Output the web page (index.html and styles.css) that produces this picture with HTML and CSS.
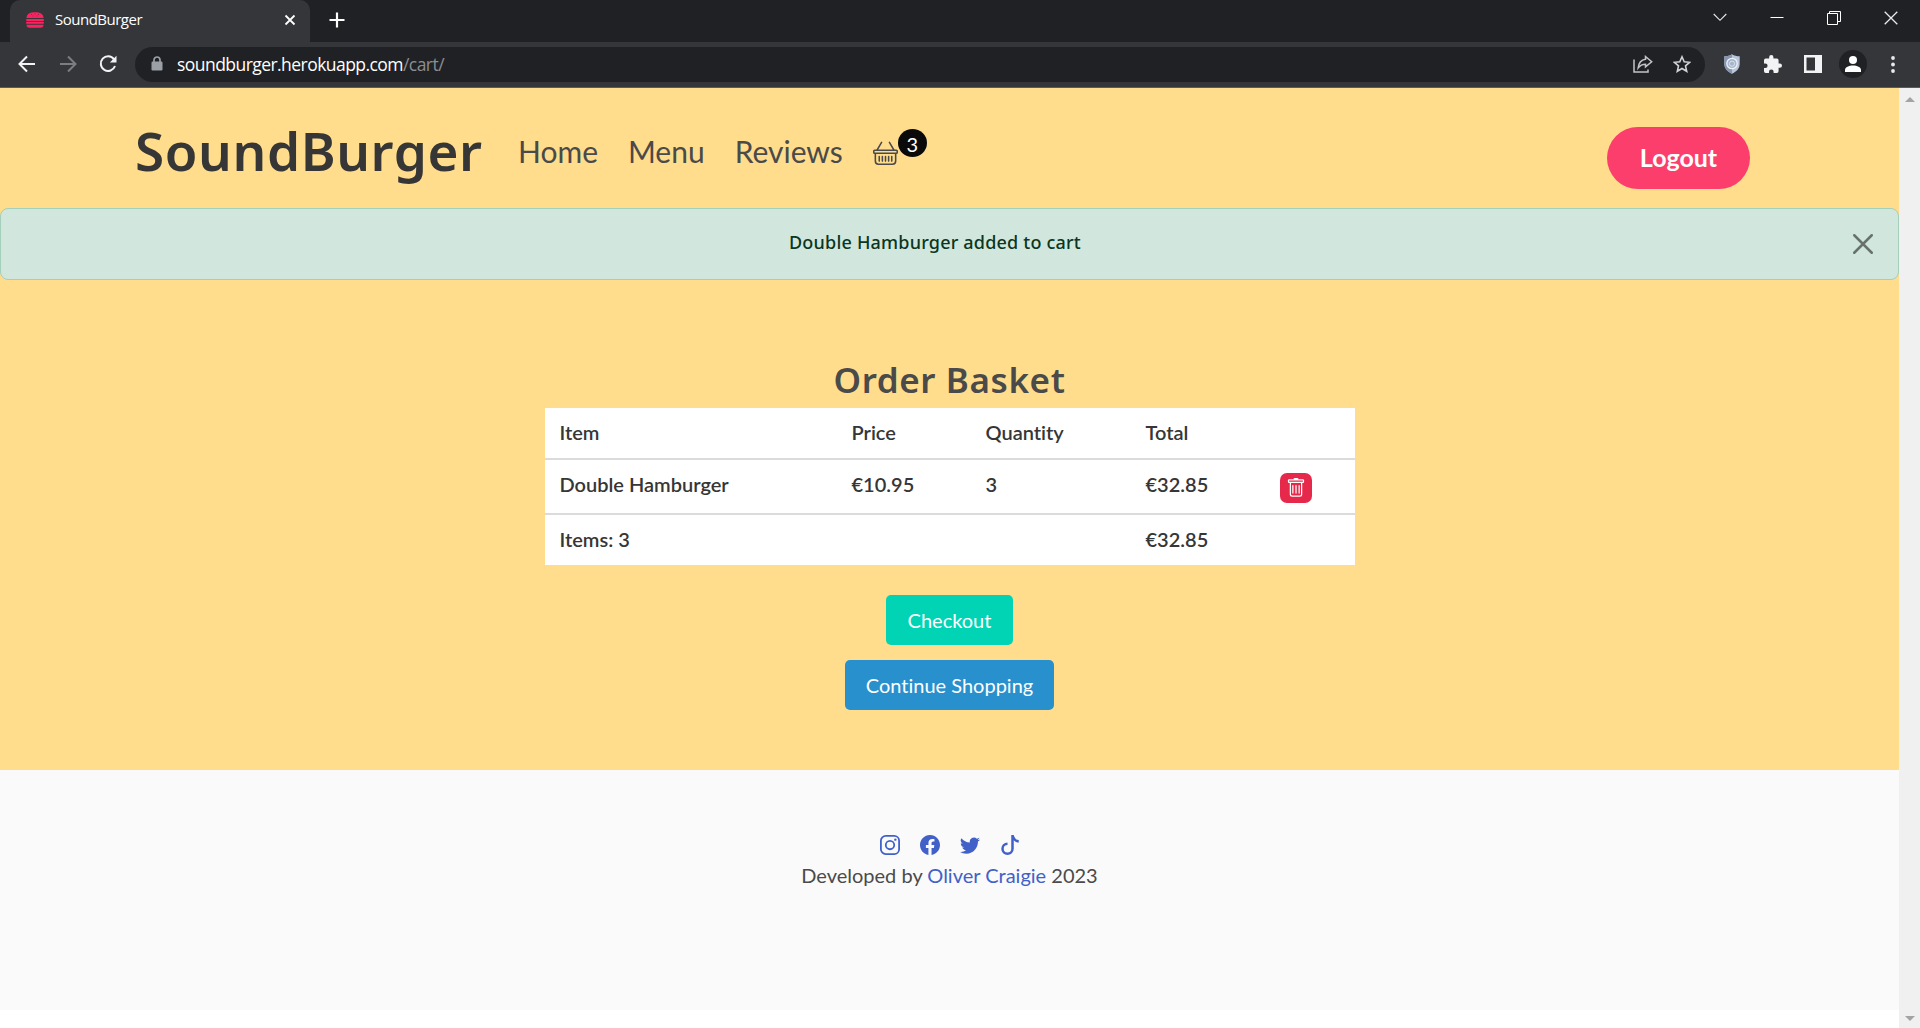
FILE: index.html
```html
<!DOCTYPE html>
<html lang="en">
<head>
<meta charset="utf-8">
<title>SoundBurger</title>
<link rel="stylesheet" href="styles.css">
</head>
<body>
<div class="browser">
  <div class="tabstrip">
    <div class="tab">
      <svg class="favicon" width="18" height="16" viewBox="0 0 18 16" fill="#f9245f"><path d="M.5 6C.5 2 4 .3 9 .3S17.500 2 17.500 6z"/><rect y="7" width="18" height="2" rx="1"/><rect y="9.800" width="18" height="2" rx="1"/><path d="M.5 12.800h17c0 2-1 3-3 3h-11c-2 0-3-1-3-3z"/><path d="M5 2.500h1M8.500 1.800h1M12 2.500h1M6.500 4h1M10.500 4h1" stroke="#a81b4a" fill="none"/></svg>
      <span class="tab-title">SoundBurger</span>
      <svg class="tab-close" width="12" height="12" viewBox="0 0 12 12" fill="none" stroke="#fff" stroke-width="1.800"><path d="M1.500 1.500l9 9M10.500 1.500l-9 9"/></svg>
    </div>
    <svg class="new-tab" width="16" height="16" viewBox="0 0 16 16" stroke="#fff" stroke-width="2.200"><path d="M8 .5v15M.5 8h15"/></svg>
    <div class="window-controls">
      <svg width="14" height="14" viewBox="0 0 14 14" fill="none" stroke="#e8eaed" stroke-width="1.100"><path d="M.7 3L7 9.300 13.300 3"/></svg>
      <svg width="14" height="14" viewBox="0 0 14 14" stroke="#fff" stroke-width="1"><path d="M.5 6.500h13"/></svg>
      <svg width="14" height="14" viewBox="0 0 14 14" fill="none" stroke="#fff" stroke-width="1"><path d="M.5 2.500h10v11H.5zM2.500 2.500v-2h11v10h-3"/></svg>
      <svg width="14" height="14" viewBox="0 0 14 14" stroke="#e8eaed" stroke-width="1.300"><path d="M.7.7l12.600 12.600M13.300.7L.7 13.300"/></svg>
    </div>
  </div>
  <div class="toolbar">
    <svg class="back" width="18" height="18" viewBox="0 0 18 18" fill="none" stroke="#f1f3f4" stroke-width="2"><path d="M17 9H2M9 1.500L1.500 9 9 16.500"/></svg>
    <svg class="forward" width="18" height="18" viewBox="0 0 18 18" fill="none" stroke="#7c7d80" stroke-width="2"><path d="M1 9h15M9 1.500L16.500 9 9 16.500"/></svg>
    <svg class="reload" width="18" height="18" viewBox="0 0 18 18" fill="none" stroke="#f1f3f4" stroke-width="2"><path d="M15 4.300A7.300 7.300 0 1 0 16 11"/><path d="M17.500.8v6.700h-6.700z" fill="#f1f3f4" stroke="none"/></svg>
    <div class="address">
      <svg width="12" height="16" viewBox="0 0 12 16"><rect x=".5" y="5.500" width="11" height="9" rx="1.200" fill="#9aa0a6"/><path d="M3 6V4a3 3 0 0 1 6 0v2" fill="none" stroke="#9aa0a6" stroke-width="1.700"/></svg>
      <span class="url">soundburger.herokuapp.com<span class="url-path">/cart/</span></span>
      <svg class="share" width="20" height="18" viewBox="0 0 20 18" fill="none" stroke="#c2c4c7" stroke-width="1.500"><path d="M1 4.500V17h14v-2.500"/><path d="M12.500 1.500L18.700 6.700l-6.200 5.200V9.200c-3.500 0-5.500 1.200-7.300 3.700.5-5 3-8 7.300-8.600z"/></svg>
      <svg class="star" width="18" height="18" viewBox="0 0 18 18" fill="none" stroke="#d0d2d5" stroke-width="1.600"><path d="M9 1.800l2.200 5 5.400.5-4.100 3.600 1.200 5.400L9 13.500l-4.700 2.800 1.200-5.400-4.100-3.600 5.400-.5z"/></svg>
    </div>
    <svg class="shield" width="16" height="20" viewBox="0 0 16 20"><path d="M8 .3c2 1.500 5 2 7.700 2v7.500c0 5-3.500 8-7.700 10-4.200-2-7.700-5-7.700-10V2.300C3 2.300 6 1.800 8 .3z" fill="#b8c6dc"/><path d="M8 .3v19.500c-4.200-2-7.700-5-7.700-10V2.300C3 2.300 6 1.800 8 .3z" fill="#8796ad"/><circle cx="8" cy="9.500" r="5.200" fill="#a7b5cb" stroke="#eef2f8" stroke-width="1.300"/><circle cx="8" cy="9.700" r="2.600" fill="none" stroke="#d9e1ed"/></svg>
    <svg class="puzzle" width="18" height="18" viewBox="2 1 21 21" fill="#f1f3f4"><path d="M20.500 11H19V7a2 2 0 0 0-2-2h-4V3.500a2.500 2.500 0 0 0-5 0V5H4a2 2 0 0 0-2 2v3.800h1.500a2.700 2.700 0 0 1 0 5.400H2V20a2 2 0 0 0 2 2h3.800v-1.500a2.700 2.700 0 0 1 5.400 0V22H17a2 2 0 0 0 2-2v-4h1.500a2.500 2.500 0 0 0 0-5z"/></svg>
    <svg class="panel" width="18" height="18" viewBox="0 0 18 18"><path fill="#f1f3f4" fill-rule="evenodd" d="M0 0h18v18H0zM2.500 2.500v13h8.500v-13z"/></svg>
    <div class="avatar"><svg width="16" height="16" viewBox="0 0 16 16" fill="#fff"><circle cx="8" cy="4" r="4"/><path d="M0 16v-2c0-3 4-4.500 8-4.500s8 1.500 8 4.500v2z"/></svg></div>
    <svg class="dots" width="4" height="17" viewBox="0 0 4 17" fill="#e8eaed"><circle cx="2" cy="2" r="1.900"/><circle cx="2" cy="8.500" r="1.900"/><circle cx="2" cy="15" r="1.900"/></svg>
  </div>
</div>
<div class="viewport">
  <div class="page">
    <div class="main">
      <header class="navbar">
        <a class="brand">SoundBurger</a>
        <nav class="links">
          <a class="home">Home</a><a class="menu">Menu</a><a class="reviews">Reviews</a>
          <a class="basket"><svg width="25" height="25" viewBox="0 0 16 16" fill="#4a4a4a"><path d="M5.757 1.071a.5.5 0 0 1 .172.686L3.383 6h9.234L10.070 1.757a.5.5 0 1 1 .858-.514L13.783 6H15a1 1 0 0 1 1 1v1a1 1 0 0 1-1 1v4.500a2.500 2.500 0 0 1-2.500 2.500h-9A2.500 2.500 0 0 1 1 13.500V9a1 1 0 0 1-1-1V7a1 1 0 0 1 1-1h1.217L5.070 1.243a.5.5 0 0 1 .687-.172zM2 9v4.500A1.500 1.500 0 0 0 3.500 15h9a1.500 1.500 0 0 0 1.500-1.500V9H2zM1 7v1h14V7H1z"/><path d="M4 10.500v3M6 10.500v3M8 10.500v3M10 10.500v3M12 10.500v3" stroke="#4a4a4a" stroke-linecap="round"/></svg><span class="count">3</span></a>
        </nav>
        <a class="logout">Logout</a>
      </header>
      <div class="alert">
        <span class="alert-text">Double Hamburger added to cart</span>
        <svg class="alert-close" width="20" height="20" viewBox="0 0 16 16" fill="none" stroke="#000" stroke-width="2" stroke-linecap="round"><path d="M1 1l14 14M15 1L1 15"/></svg>
      </div>
      <section class="order">
        <h1 class="title">Order Basket</h1>
        <div class="table">
          <div class="row head"><span>Item</span><span>Price</span><span>Quantity</span><span>Total</span><span></span></div>
          <div class="row item"><span>Double Hamburger</span><span>€10.95</span><span>3</span><span>€32.85</span><span class="delete"><svg width="20" height="20" viewBox="0 0 16 16" fill="#fff"><path d="M5.500 5.500A.5.5 0 0 1 6 6v6a.5.5 0 0 1-1 0V6a.5.5 0 0 1 .5-.5zm2.500 0a.5.5 0 0 1 .5.5v6a.5.5 0 0 1-1 0V6a.5.5 0 0 1 .5-.5zm3 .5a.5.5 0 0 0-1 0v6a.5.5 0 0 0 1 0V6z"/><path fill-rule="evenodd" d="M14.500 3a1 1 0 0 1-1 1H13v9a2 2 0 0 1-2 2H5a2 2 0 0 1-2-2V4h-.5a1 1 0 0 1-1-1V2a1 1 0 0 1 1-1H6a1 1 0 0 1 1-1h2a1 1 0 0 1 1 1h3.500a1 1 0 0 1 1 1v1zM4.118 4 4 4.059V13a1 1 0 0 0 1 1h6a1 1 0 0 0 1-1V4.059L11.882 4H4.118zM2.500 3V2h11v1h-11z"/></svg></span></div>
          <div class="row total"><span>Items: 3</span><span></span><span></span><span>€32.85</span><span></span></div>
        </div>
        <a class="button checkout">Checkout</a>
        <a class="button continue">Continue Shopping</a>
      </section>
    </div>
    <footer class="footer">
      <div class="social">
        <svg width="20" height="20" viewBox="0 0 16 16" fill="none" stroke="#4161c9" stroke-width="1.440"><rect x=".72" y=".72" width="14.560" height="14.560" rx="3.900"/><circle cx="8" cy="8" r="3.380"/><circle cx="12.270" cy="3.730" r=".96" fill="#4161c9" stroke="none"/></svg>
        <svg width="20" height="20" viewBox="0 0 16 16" fill="#4161c9"><path d="M16 8.049c0-4.446-3.582-8.050-8-8.050C3.580 0-.002 3.603-.002 8.050c0 4.017 2.926 7.347 6.750 7.951v-5.625h-2.030V8.050H6.750V6.275c0-2.017 1.195-3.131 3.022-3.131.876 0 1.791.157 1.791.157v1.980h-1.009c-.993 0-1.303.621-1.303 1.258v1.510h2.218l-.354 2.326H9.250V16c3.824-.604 6.750-3.934 6.750-7.951z"/></svg>
        <svg width="20" height="20" viewBox="0 0 16 16" fill="#4161c9"><path d="M5.026 15c6.038 0 9.341-5.003 9.341-9.334 0-.14 0-.282-.006-.422A6.685 6.685 0 0 0 16 3.542a6.658 6.658 0 0 1-1.889.518 3.301 3.301 0 0 0 1.447-1.817 6.533 6.533 0 0 1-2.087.793A3.286 3.286 0 0 0 7.875 6.030a9.325 9.325 0 0 1-6.767-3.429 3.289 3.289 0 0 0 1.018 4.382A3.323 3.323 0 0 1 .64 6.575v.045a3.288 3.288 0 0 0 2.632 3.218 3.203 3.203 0 0 1-.865.115 3.230 3.230 0 0 1-.614-.057 3.283 3.283 0 0 0 3.067 2.277A6.588 6.588 0 0 1 .78 13.580a6.320 6.320 0 0 1-.78-.045A9.344 9.344 0 0 0 5.026 15z"/></svg>
        <svg width="20" height="20" viewBox="0 0 16 16" fill="#4161c9"><path d="M9 0h1.980c.144.715.54 1.617 1.235 2.512C12.895 3.389 13.797 4 15 4v2c-1.753 0-3.070-.814-4-1.829V11a5 5 0 1 1-5-5v2a3 3 0 1 0 3 3V0Z"/></svg>
      </div>
      <p class="credit">Developed by <a class="author">Oliver Craigie</a> 2023</p>
    </footer>
  </div>
  <div class="scrollbar"><i class="arrow up"></i><i class="arrow down"></i></div>
</div>
</body>
</html>
```

FILE: styles.css
```css
* { box-sizing: border-box; }
body { margin: 0; height: 1028px; display: flex; flex-direction: column; overflow: hidden; background: #fff; font-family: Lato, "Liberation Sans", sans-serif; color: #4a4a4a; font-variant-ligatures: none; }
svg { display: block; flex: none; }

.browser { height: 88px; flex: none; background: #35363a; border-bottom: 1px solid #5a5b5f; font-family: "Open Sans", "Noto Sans", sans-serif; }
.tabstrip { height: 42px; background: #202124; display: flex; align-items: flex-start; padding-left: 10px; }
.tab { width: 300px; height: 42px; background: #35363a; border-radius: 10px 10px 0 0; display: flex; align-items: center; padding: 0 14px 3px 16px; }
.tab-title { margin: -2px 0 0 11px; color: #fff; font-size: 15px; letter-spacing: -.5px; white-space: nowrap; }
.tab-close { margin-left: auto; }
.new-tab { margin: 12px 0 0 19px; }
.window-controls { margin: 11px 22px 0 auto; display: flex; gap: 43px; }
.toolbar { height: 44px; display: flex; align-items: center; }
.back { margin-left: 18px; }
.forward { margin-left: 23px; }
.reload { margin-left: 22px; }
.address { margin-left: 18px; width: 1570px; height: 35px; border-radius: 18px; background: #202124; display: flex; align-items: center; padding: 0 14px 0 16px; }
.url { margin-left: 14px; color: #fff; font-size: 17.5px; letter-spacing: -.55px; white-space: nowrap; }
.url-path { color: #8b8e92; }
.share { margin-left: auto; }
.star { margin-left: 20px; }
.shield { margin-left: 19px; }
.puzzle { margin-left: 24px; }
.panel { margin-left: 22px; }
.avatar { width: 28px; height: 28px; margin-left: 17px; border-radius: 50%; background: #202124; display: flex; align-items: center; justify-content: center; }
.dots { margin-left: 24px; }

.viewport { flex: 1; min-height: 0; display: flex; }
.page { width: 1899px; }
.main { height: 682px; background: #ffdd8c; }
.scrollbar { width: 21px; background: #f0f0f0; display: flex; flex-direction: column; align-items: center; justify-content: space-between; padding: 9px 0 7px; }
.arrow { border: 5px solid transparent; border-top: 0; border-bottom-color: #a3a3a3; }
.arrow.down { border-top: 5px solid #a3a3a3; border-bottom: 0; }

.navbar { height: 120px; padding: 0 149px 0 135px; display: flex; align-items: flex-start; }
.brand { width: 383px; padding-top: 27px; font-family: "Noto Sans", sans-serif; font-weight: 600; font-size: 53px; line-height: 72px; letter-spacing: .6px; color: #363636; white-space: nowrap; }
.links { display: flex; align-items: flex-start; gap: 30px; padding-top: 45px; font-size: 30px; line-height: 36px; }
.basket { display: flex; padding-top: 7px; }
.count { width: 29px; height: 28px; margin: -11px 0 0; border-radius: 50%; background: #0a0a0a; color: #fff; font: 20px/31px Lato, sans-serif; text-align: center; }
.logout { margin: 39px 0 0 auto; width: 143px; height: 62px; border-radius: 31px; background: #fb3e6c; color: #fff; font-size: 25px; font-weight: 700; line-height: 60px; text-align: center; }

.alert { height: 72px; border: 1px solid #a3cfbb; border-radius: 8px; background: #d1e7dd; display: flex; align-items: flex-start; color: #0a3622; }
.alert-text { flex: 1; padding: 20px 0 0 16px; text-align: center; font-family: "Noto Sans", sans-serif; font-size: 18px; line-height: 26px; letter-spacing: .2px; font-weight: 500; }
.alert-close { margin: 25px 25px 0 0; opacity: .5; }

.order { display: flex; flex-direction: column; align-items: center; padding-top: 72px; }
.title { margin: 0; height: 56px; font-family: "Noto Sans", sans-serif; font-size: 35px; line-height: 55px; letter-spacing: .6px; font-weight: 600; }
.table { width: 810px; background: #fff; color: #363636; font-size: 20px; font-weight: 600; line-height: 29px; }
.row { display: grid; grid-template-columns: 292px 134px 160px 134px 1fr; padding: 10px 15px; }
.head, .item { border-bottom: 2px solid #dbdbdb; }
.head { height: 52px; }
.item { height: 55px; }
.total { height: 50px; }
.delete { width: 32px; height: 30px; margin-top: 3px; border-radius: 7px; background: #e6294b; display: flex; align-items: center; justify-content: center; }
.button { height: 50px; border-radius: 5px; color: #fff; font-size: 20px; line-height: 50px; text-align: center; }
.checkout { width: 127px; margin-top: 30px; background: #00d4b4; }
.continue { width: 209px; margin-top: 15px; background: #2990ce; }

.footer { height: 240px; background: #fafafa; padding-top: 65px; font-size: 20px; line-height: 30px; }
.social { display: flex; justify-content: center; gap: 20px; }
.credit { margin: 5px 0 0; text-align: center; }
.author { color: #4161c9; }
```
